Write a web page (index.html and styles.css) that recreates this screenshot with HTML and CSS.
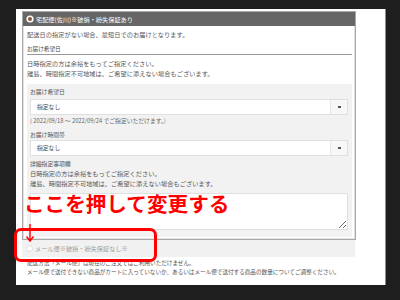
FILE: index.html
```html
<!DOCTYPE html>
<html lang="ja">

<head>
    <meta charset="UTF-8">
    <meta name="viewport" content="width=device-width, initial-scale=1.0">
    <title>配送方法の選択</title>
    <link rel="stylesheet" href="styles.css">
</head>

<body>

    <div class="page">
        <div class="panel">
            <div class="panel-head">
                <svg class="radio-on" width="8" height="8" viewBox="0 0 8 8">
                    <circle cx="4" cy="4" r="3.6" fill="#fff"/>
                    <circle cx="4" cy="4" r="2" fill="#8a5634"/>
                </svg>
                <span>宅配便(佐川)※破損・紛失保証あり</span>
            </div>
            <div class="panel-body">
                <p class="note">配送日の指定がない場合、最短日でのお届けとなります。</p>
                <h2 class="sub-title">お届け希望日</h2>
                <p class="note">日時指定の方は余裕をもってご指定ください。</p>
                <p class="note">離島、時間指定不可地域は、ご希望に添えない場合もございます。</p>

                <div class="form-box">
                    <label class="field-label">お届け希望日</label>
                    <div class="select">
                        <span class="select-value">指定なし</span>
                        <span class="select-arrow"><i></i></span>
                    </div>
                    <p class="hint">( 2022/09/18 ～ 2022/09/24 でご指定いただけます。)</p>

                    <label class="field-label">お届け時間帯</label>
                    <div class="select">
                        <span class="select-value">指定なし</span>
                        <span class="select-arrow"><i></i></span>
                    </div>

                    <label class="field-label field-label-wide">詳細指定事項欄</label>
                    <p class="note">日時指定の方は余裕をもってご指定ください。</p>
                    <p class="note">離島、時間指定不可地域は、ご希望に添えない場合もございます。</p>
                    <textarea class="memo"></textarea>
                </div>
            </div>
        </div>

        <div class="option-row">
            <span class="radio-off"></span>
            <span>メール便※破損・紛失保証なし※</span>
        </div>
        <div class="option-note">
            <p>配送方法「メール便」は現在のご注文ではご利用いただけません。</p>
            <p>メール便で送付できない商品がカートに入っていないか、あるいはメール便で送付する商品の数量についてご調整ください。</p>
        </div>
    </div>

    <!-- annotation drawn over the screenshot -->
    <div class="callout-text">ここを押して変更する</div>
    <svg class="callout-arrow" width="10" height="20" viewBox="0 0 10 20">
        <path d="M5 1 V18 M1.5 13.5 L5 18 L8.5 13.5" fill="none" stroke="#f00" stroke-width="1.4"/>
    </svg>
    <div class="callout-box"></div>

</body>

</html>
```

FILE: styles.css
```css
body {
    margin: 0;
    padding: 9px 0 0 16px;
    background-color: #1e1e1e;
    font-family: "Noto Sans CJK JP", "Noto Sans", sans-serif;
    position: relative;
    height: 291px;
    overflow: hidden;
}

p,
h2 {
    margin: 0;
}

.page {
    width: 370px;
    height: 276px;
    background-color: #fff;
    border-right: 1px solid #8c8c8c;
    padding-top: 2px;
    box-sizing: border-box;
}

.panel {
    width: 334px;
    margin-left: 6px;
    border: 1px solid #a8a8a8;
    box-shadow: inset 0 0 0 1px #e2e2e2;
    box-sizing: border-box;
}

.panel-head {
    height: 14px;
    background-color: #666;
    color: #fff;
    font-size: 6.2px;
    display: flex;
    align-items: center;
    gap: 2px;
    padding-left: 3px;
}

.panel-body {
    padding: 4px 3px 2px 4px;
}

.note {
    font-size: 6.2px;
    line-height: 10.5px;
    color: #555;
    letter-spacing: 0.05px;
}

.sub-title {
    font-size: 5.6px;
    font-weight: normal;
    color: #444;
    line-height: 8px;
    margin-top: 4px;
    border-bottom: 1px solid #999;
    padding-bottom: 1px;
    margin-bottom: 4px;
}

.form-box {
    background-color: #f2f2f2;
    padding: 3px 4px 7px 3px;
    margin-top: 4px;
}

.field-label {
    display: block;
    font-size: 5.8px;
    color: #555;
    line-height: 10px;
    margin-top: 5px;
}

.form-box .field-label:first-child {
    margin-top: 0;
    margin-bottom: 2px;
}

.field-label-wide {
    margin-top: 3px;
}

.select {
    height: 16px;
    background-color: #fff;
    border: 1px solid #e0e0e0;
    box-sizing: border-box;
    display: flex;
    align-items: center;
}

.select-value {
    flex: 1;
    font-size: 5.8px;
    color: #444;
    padding-left: 6px;
}

.select-arrow {
    width: 16px;
    height: 100%;
    border-left: 1px solid #e6e6e6;
    background-color: #f7f7f7;
    display: flex;
    align-items: center;
    justify-content: center;
}

.select-arrow i {
    width: 3px;
    height: 2px;
    background-color: #555;
}

.hint {
    font-size: 5.8px;
    color: #666;
    line-height: 11px;
    margin-bottom: -1px;
}

.memo {
    display: block;
    width: 100%;
    height: 37px;
    margin-top: 3px;
    box-sizing: border-box;
    border: 1px solid #e0e0e0;
    background-color: #fff;
    padding: 0;
}

.option-row {
    width: 333px;
    margin-left: 6px;
    height: 17px;
    background-color: #f1f1f1;
    display: flex;
    align-items: center;
    gap: 2px;
    padding-left: 4px;
    box-sizing: border-box;
    font-size: 6.2px;
    color: #a0a0a0;
}

.radio-off {
    width: 7px;
    height: 7px;
    border-radius: 50%;
    border: 1px solid #ddd;
    background-color: #fff;
    box-sizing: border-box;
}

.option-note {
    padding: 2px 0 0 11px;
    font-size: 5.6px;
    color: #555;
    line-height: 9.5px;
}

.callout-text {
    position: absolute;
    left: 24px;
    top: 193px;
    font-size: 20.6px;
    font-weight: bold;
    color: #f00;
    line-height: 20px;
    white-space: nowrap;
}

.callout-arrow {
    position: absolute;
    left: 25px;
    top: 223px;
}

.callout-box {
    position: absolute;
    left: 14px;
    top: 228px;
    width: 143px;
    height: 34px;
    border: 3px solid #f00;
    border-radius: 7px;
    box-sizing: border-box;
}
```
